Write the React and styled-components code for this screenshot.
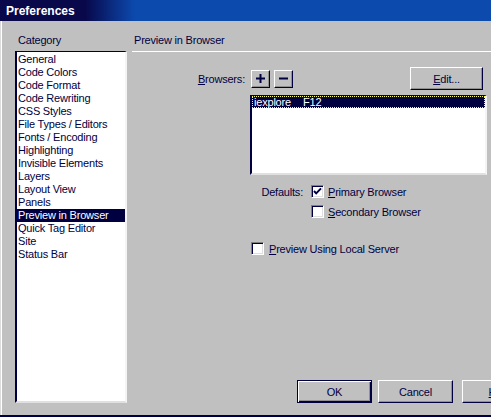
import React from 'react';
import styled, { createGlobalStyle } from 'styled-components';

const NAVY = '#000040';
const FACE = '#c0c0c0';

const Global = createGlobalStyle`
  html, body { margin: 0; padding: 0; background: ${FACE}; overflow: hidden; }
  * { box-sizing: border-box; }
`;

const Window = styled.div`
  width: 491px;
  height: 417px;
  background: ${FACE};
  display: flex;
  flex-direction: column;
  overflow: hidden;
  border-bottom: 2px solid ${NAVY};
  font-family: "Liberation Sans", Arial, sans-serif;
  font-size: 11px;
  letter-spacing: -0.2px;
  color: ${NAVY};
`;

const TitleBar = styled.div`
  height: 21px;
  flex-shrink: 0;
  padding: 1px 0 0 6px;
  display: flex;
  align-items: center;
  background: linear-gradient(90deg, #08084a 0, #08084a 85px, #0c4aae 135px, #0c4aae 100%);
  color: #fff;
  font-weight: bold;
  font-size: 12px;
  letter-spacing: 0;
`;

const Main = styled.div`
  flex: 1;
  display: flex;
  min-height: 0;
  padding: 13px 0 12px 0;
  box-shadow: inset 1px 0 #dcdcdc, inset 2px 0 #ffffff;
`;

const LeftCol = styled.div`
  margin-left: 15px;
  width: 112px;
  flex-shrink: 0;
  display: flex;
  flex-direction: column;
  gap: 4px;
`;

const Label = styled.div`
  line-height: 13px;
  padding-left: ${p => p.$indent || 0}px;
`;

const ListBox = styled.div`
  background: #fff;
  border-style: solid;
  border-width: 1px 2px 2px 2px;
  border-color: ${NAVY} #f4f4f4 #e0e0e0 ${NAVY};
  padding-top: ${p => p.$padTop || 0}px;
  height: ${p => p.$h}px;
  width: ${p => (p.$w ? `${p.$w}px` : 'auto')};
  margin: ${p => p.$margin || 0};
  flex-shrink: 0;
`;

const Item = styled.div`
  height: ${p => p.$h || 13}px;
  line-height: ${p => p.$h || 13}px;
  padding-left: ${p => p.$pl || 1}px;
  white-space: nowrap;
  background: ${p => (p.$selected ? NAVY : 'transparent')};
  color: ${p => (p.$selected ? '#fff' : NAVY)};
  outline: ${p => (p.$focus ? '1px dotted #ffff60' : 'none')};
  outline-offset: -1px;
  display: flex;
`;

const Cell = styled.span`
  width: ${p => (p.$w ? `${p.$w}px` : 'auto')};
`;

const RightCol = styled.div`
  flex: 1;
  min-width: 0;
  margin-left: 5px;
  display: flex;
  flex-direction: column;
`;

const Header = styled.div`
  line-height: 13px;
  padding: 0 0 4px 2px;
  border-bottom: 1px solid #ffffff;
`;

const BrowsersRow = styled.div`
  margin-top: 15px;
  height: 23px;
  display: flex;
  align-items: center;
  padding-right: 8px;
`;

const FieldLabel = styled.span`
  width: ${p => p.$w}px;
  text-align: right;
  margin-right: ${p => p.$gap}px;
  flex-shrink: 0;
`;

const U = styled.span`
  text-decoration: underline;
  text-underline-offset: 1px;
`;

const RaisedButton = styled.button`
  font: inherit;
  color: ${NAVY};
  letter-spacing: inherit;
  background: ${FACE};
  width: ${p => p.$w}px;
  height: ${p => p.$h}px;
  margin-left: ${p => (p.$auto ? 'auto' : `${p.$ml || 0}px`)};
  flex-shrink: 0;
  padding: 0;
  display: flex;
  align-items: center;
  justify-content: center;
  border-style: solid;
  border-width: 1px;
  border-color: ${p => (p.$default ? `${NAVY}` : `#ffffff ${NAVY} ${NAVY} #ffffff`)};
  box-shadow: ${p =>
    p.$default
      ? `inset 1px 1px #ffffff, inset -1px -1px ${NAVY}, inset -2px -2px #909090`
      : 'inset -1px -1px #909090'};
  cursor: default;
`;

const CheckRow = styled.div`
  margin-top: ${p => p.$mt}px;
  height: 13px;
  display: flex;
  align-items: center;
  padding-left: ${p => p.$pl || 0}px;
`;

const Box = styled.span`
  width: 13px;
  height: 13px;
  flex-shrink: 0;
  background: #fff;
  border: 1px solid;
  border-color: #808080 #ffffff #ffffff #808080;
  box-shadow: inset 1px 1px ${NAVY}, inset -1px -1px #dfdfdf;
  display: flex;
  align-items: center;
  justify-content: center;
`;

const CheckText = styled.span`
  margin-left: ${p => p.$gap}px;
  white-space: nowrap;
`;

const ButtonBar = styled.div`
  margin-top: auto;
  display: flex;
  padding-left: 165px;
`;

const Checkbox = ({ checked }) => (
  <Box>
    {checked && (
      <svg width="9" height="9" viewBox="0 0 9 9">
        <polyline points="1,4 3.2,6.4 8,1.4" fill="none" stroke={NAVY} strokeWidth="2" />
      </svg>
    )}
  </Box>
);

const categories = [
  'General',
  'Code Colors',
  'Code Format',
  'Code Rewriting',
  'CSS Styles',
  'File Types / Editors',
  'Fonts / Encoding',
  'Highlighting',
  'Invisible Elements',
  'Layers',
  'Layout View',
  'Panels',
  'Preview in Browser',
  'Quick Tag Editor',
  'Site',
  'Status Bar',
];

export default function App() {
  return (
    <>
      <Global />
      <Window>
        <TitleBar>Preferences</TitleBar>
        <Main>
          <LeftCol>
            <Label $indent={3}>Category</Label>
            <ListBox $h={352} $padTop={1}>
              {categories.map(c => (
                <Item key={c} $selected={c === 'Preview in Browser'}>
                  {c}
                </Item>
              ))}
            </ListBox>
          </LeftCol>
          <RightCol>
            <Header>Preview in Browser</Header>
            <BrowsersRow>
              <FieldLabel $w={113} $gap={6}>
                <U>B</U>rowsers:
              </FieldLabel>
              <RaisedButton $w={19} $h={18}>
                <svg width="9" height="9" viewBox="0 0 9 9">
                  <path d="M3.5 0h2v3.5H9v2H5.5V9h-2V5.5H0v-2h3.5z" fill={NAVY} />
                </svg>
              </RaisedButton>
              <RaisedButton $w={19} $h={18} $ml={4}>
                <svg width="9" height="9" viewBox="0 0 9 9">
                  <rect x="0" y="3.5" width="9" height="2" fill={NAVY} />
                </svg>
              </RaisedButton>
              <RaisedButton $w={73} $h={23} $auto>
                <span>
                  <U>E</U>dit...
                </span>
              </RaisedButton>
            </BrowsersRow>
            <ListBox $h={80} $w={237} $margin="5px 0 0 118px">
              <Item $h={12} $pl={2} $selected $focus>
                <Cell $w={49}>iexplore</Cell>
                <Cell>F12</Cell>
              </Item>
            </ListBox>
            <CheckRow $mt={10}>
              <FieldLabel $w={171} $gap={8}>Defaults:</FieldLabel>
              <Checkbox checked />
              <CheckText $gap={4}>
                <U>P</U>rimary Browser
              </CheckText>
            </CheckRow>
            <CheckRow $mt={7} $pl={179}>
              <Checkbox />
              <CheckText $gap={4}>
                <U>S</U>econdary Browser
              </CheckText>
            </CheckRow>
            <CheckRow $mt={24} $pl={119}>
              <Checkbox />
              <CheckText $gap={5}>
                <U>P</U>review Using Local Server
              </CheckText>
            </CheckRow>
            <ButtonBar>
              <RaisedButton $w={75} $h={23} $default>
                OK
              </RaisedButton>
              <RaisedButton $w={75} $h={23} $ml={6}>
                Cancel
              </RaisedButton>
              <RaisedButton $w={75} $h={23} $ml={9}>
                <span>
                  <U>H</U>elp
                </span>
              </RaisedButton>
            </ButtonBar>
          </RightCol>
        </Main>
      </Window>
    </>
  );
}
